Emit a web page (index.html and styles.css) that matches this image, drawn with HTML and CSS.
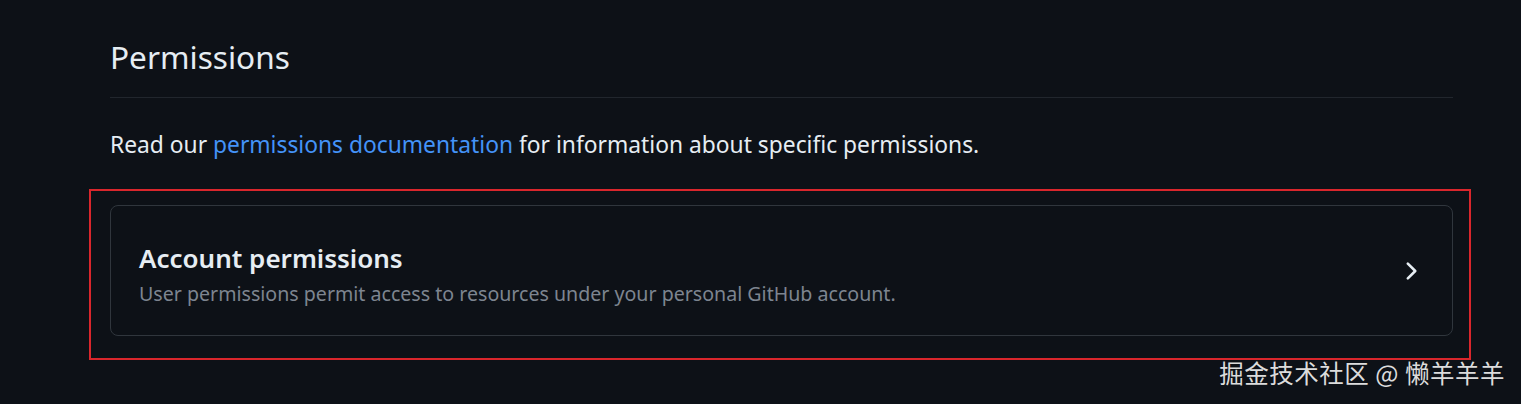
FILE: index.html
```html
<!DOCTYPE html>
<html lang="en">
<head>
<meta charset="utf-8">
<link rel="stylesheet" href="styles.css">
</head>
<body>
<main class="page">
  <h2 class="heading">Permissions</h2>
  <p class="intro">Read our <a class="link" href="#">permissions documentation</a> for information about specific permissions.</p>
  <div class="card-wrap">
    <div class="card">
      <div class="card-text">
        <div class="card-title">Account permissions</div>
        <div class="card-desc">User permissions permit access to resources under your personal GitHub account.</div>
      </div>
      <svg class="chevron" viewBox="0 0 16 16" width="28" height="28" aria-hidden="true"><path fill="currentColor" d="M6.22 3.22a.75.75 0 0 1 1.06 0l4.25 4.250a.75.75 0 0 1 0 1.06l-4.25 4.25a.751.751 0 0 1-1.042-.018.751.751 0 0 1-.018-1.042L9.94 8 6.22 4.28a.75.75 0 0 1 0-1.06Z"/></svg>
    </div>
    <div class="highlight"></div>
  </div>
</main>
<div class="watermark">掘金技术社区 @ 懒羊羊羊</div>
</body>
</html>
```

FILE: styles.css
```css
html, body {
  margin: 0;
  padding: 0;
  background: #0d1117;
  height: 100%;
  overflow: hidden;
}
body {
  font-family: "Noto Sans", "Open Sans", sans-serif;
  color: #e6edf3;
  position: relative;
  width: 1521px;
  height: 404px;
}
.page {
  margin-left: 110px;
  width: 1343px;
  padding-top: 33px;
}
.heading {
  margin: 0;
  font-weight: 400;
  font-size: 31.6px;
  line-height: 48px;
  padding-bottom: 16px;
  border-bottom: 1px solid #21262d;
}
.intro {
  margin: 30px 0 0;
  font-size: 22.8px;
  line-height: 34px;
}
.link {
  color: #4493f8;
  text-decoration: none;
}
.card-wrap {
  position: relative;
  margin-top: 43px;
}
.card {
  box-sizing: border-box;
  height: 131px;
  border: 1px solid #30363d;
  border-radius: 8px;
  display: flex;
  align-items: center;
  justify-content: space-between;
  padding: 0 28px;
}
.card-text {
  padding-top: 8px;
}
.card-title {
  font-size: 26px;
  font-weight: 600;
  line-height: 34px;
}
.card-desc {
  margin-top: 4px;
  font-size: 19.6px;
  color: #7d8590;
  line-height: 30px;
}
.chevron {
  color: #e6edf3;
  margin-right: 0;
}
.highlight {
  position: absolute;
  left: -21px;
  top: -16px;
  right: -18px;
  bottom: -24px;
  border: 2px solid #d9262c;
}
.watermark {
  position: absolute;
  right: 16px;
  bottom: 14px;
  font-family: "Noto Sans CJK SC", sans-serif;
  font-size: 24.5px;
  color: #dcdcdc;
  letter-spacing: 0.5px;
}
```
